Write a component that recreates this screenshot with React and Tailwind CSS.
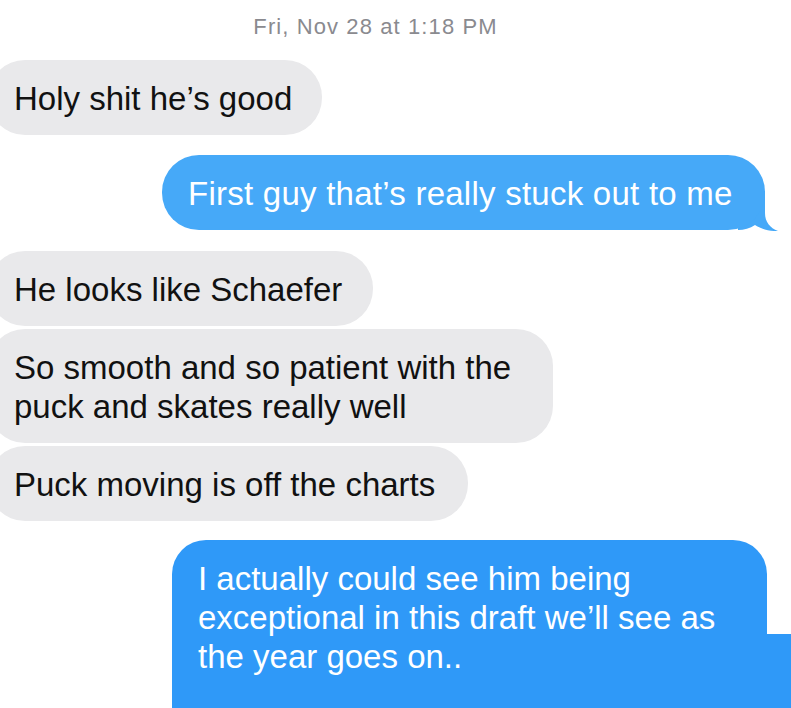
export default function App() {
  const gray =
    "ml-[-12px] rounded-[37px] bg-[#e9e9eb] pl-[26px] pt-[19px] pb-[17px] text-[33px] leading-[39px] text-[#111111] whitespace-nowrap";
  return (
    <div className="relative h-[708px] w-[791px] overflow-hidden bg-white font-['Liberation_Sans',Arial,sans-serif]">
      <div className="pt-[13px] pr-[40px] text-center text-[22px] leading-[28px] tracking-[1.1px] text-[#8a8a8f]">
        Fri, Nov 28 at 1:18 PM
      </div>
      <div className="flex flex-col">
        <div className={`${gray} mt-[19px] w-[334px]`}>Holy shit he’s good</div>

        <div className="relative mt-[20px] mr-[26px] w-[603px] self-end">
          <div className="relative z-10 rounded-[37px] bg-[#46a9f8] pl-[26px] pt-[19px] pb-[17px] text-[33px] leading-[39px] tracking-[0.25px] text-white whitespace-nowrap">
            First guy that’s really stuck out to me
          </div>
          <svg
            className="absolute bottom-[-1px] right-[-13px] z-0"
            width="40"
            height="40"
            viewBox="0 0 40 40"
          >
            <path
              d="M0 39 L0 0 L27 0 L27 22 C27 31 32 37 40 40 C32 40.5 23 38 17 34 C12 37.5 6 39 0 39 Z"
              fill="#46a9f8"
            />
          </svg>
        </div>

        <div className={`${gray} mt-[21px] w-[385px]`}>He looks like Schaefer</div>
        <div className={`${gray} mt-[3px] w-[565px]`}>
          So smooth and so patient with the
          <br />
          puck and skates really well
        </div>
        <div className={`${gray} mt-[3px] w-[480px]`}>Puck moving is off the charts</div>

        <div className="mt-[19px] mr-[24px] h-[220px] w-[595px] self-end rounded-[34px] bg-[#2f99f8] pl-[26px] pt-[19px] text-[33px] leading-[39px] text-white whitespace-nowrap">
          I actually could see him being
          <br />
          exceptional in this draft we’ll see as
          <br />
          the year goes on..
        </div>
      </div>
      <div className="absolute bottom-0 right-0 h-[74px] w-[138px] bg-[#2f99f8]" />
    </div>
  );
}
